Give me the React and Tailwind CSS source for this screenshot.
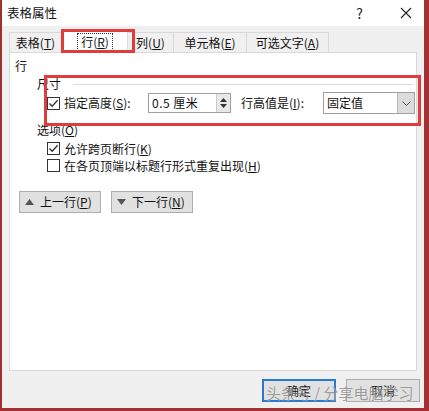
import React from "react";

const font = { fontFamily: '"Noto Sans CJK SC", "Liberation Sans", sans-serif' };

function Check({ checked }) {
  return (
    <span className="w-[13px] h-[13px] border border-[#333] bg-white flex items-center justify-center shrink-0">
      {checked && (
        <svg width="11" height="11" viewBox="0 0 11 11">
          <path d="M1.5 5.5 L4.2 8.3 L9.6 2.2" fill="none" stroke="#333" strokeWidth="1.3" />
        </svg>
      )}
    </span>
  );
}

export default function App() {
  return (
    <div className="w-[429px] h-[411px] bg-[#a23030] pl-[2px] pr-[5px] pb-[3px] text-[12px] text-[#111] leading-none relative overflow-hidden" style={font}>
      <div className="w-full h-full bg-[#f0f0f0] flex flex-col">
        {/* title bar */}
        <div className="h-[26px] bg-white flex items-center pl-[5px] pr-[12px] shrink-0">
          <span className="text-[12.5px]">表格属性</span>
          <span className="ml-auto text-[14px] mr-[37px] text-[#222]">?</span>
          <svg width="12" height="12" viewBox="0 0 12 12"><path d="M1 1 L11 11 M11 1 L1 11" stroke="#222" strokeWidth="1.1" /></svg>
        </div>
        {/* tabs */}
        <div className="h-[26px] flex items-end px-[7px] shrink-0">
          <div className="h-[20px] w-[53px] border border-b-0 border-[#d9d9d9] bg-[#f0f0f0] flex items-center justify-center">表格(<u>T</u>)</div>
          <div className="h-[23px] w-[66px] border border-b-0 border-[#d9d9d9] bg-white flex items-center justify-center relative top-[1px]">
            <span className="border border-dotted border-[#333] px-[3px] py-[2px]">行(<u>R</u>)</span>
          </div>
          <div className="h-[20px] w-[46px] border border-l-0 border-b-0 border-[#d9d9d9] flex items-center justify-center">列(<u>U</u>)</div>
          <div className="h-[20px] w-[73px] border border-l-0 border-b-0 border-[#d9d9d9] flex items-center justify-center">单元格(<u>E</u>)</div>
          <div className="h-[20px] w-[82px] border border-l-0 border-b-0 border-[#d9d9d9] flex items-center justify-center">可选文字(<u>A</u>)</div>
        </div>
        {/* panel */}
        <div className="h-[319px] mx-[7px] bg-white border border-[#d9d9d9] pl-[5px] pt-[7px] shrink-0">
          <div>行</div>
          <div className="pl-[22px] mt-[6px] flex items-center">
            <span>尺寸</span>
            <div className="flex-1 h-px bg-[#dcdcdc] ml-[12px] mr-[3px]" />
          </div>
          <div className="pl-[32px] mt-[3px] flex items-center h-[20px]">
            <Check checked />
            <span className="ml-[4px] w-[73px]">指定高度(<u>S</u>):</span>
            <div className="ml-[11px] w-[83px] h-[20px] border border-[#a0a0a0] flex items-center">
              <span className="pl-[3px] flex-1 tracking-[0.5px]">0.5 厘米</span>
              <div className="w-[14px] h-full border-l border-[#ccc] bg-[#e8e8e8] flex flex-col items-center justify-center gap-[2px]">
                <svg width="7" height="4" viewBox="0 0 7 4"><path d="M0 4 L3.5 0 L7 4Z" fill="#333" /></svg>
                <svg width="7" height="4" viewBox="0 0 7 4"><path d="M0 0 L3.5 4 L7 0Z" fill="#333" /></svg>
              </div>
            </div>
            <span className="ml-[10px] w-[72px]">行高值是(<u>I</u>):</span>
            <div className="ml-[10px] w-[92px] h-[22px] border border-[#a0a0a0] flex items-center">
              <span className="pl-[3px] flex-1">固定值</span>
              <div className="w-[17px] h-full bg-[#dcdcdc] border-l border-[#bbb] flex items-center justify-center">
                <svg width="9" height="5" viewBox="0 0 9 5"><path d="M0.5 0.5 L4.5 4.5 L8.5 0.5" fill="none" stroke="#555" /></svg>
              </div>
            </div>
          </div>
          <div className="pl-[22px] mt-[11px]">选项(<u>O</u>)</div>
          <div className="pl-[32px] mt-[6px] flex items-center">
            <Check checked />
            <span className="ml-[4px]">允许跨页断行(<u>K</u>)</span>
          </div>
          <div className="pl-[32px] mt-[4px] flex items-center">
            <Check />
            <span className="ml-[4px]">在各页顶端以标题行形式重复出现(<u>H</u>)</span>
          </div>
          <div className="mt-[19px] pl-[4px] flex gap-[10px]">
            <div className="w-[82px] h-[22px] bg-[#e1e1e1] border border-[#adadad] flex items-center pl-[5px] gap-[6px]">
              <svg width="9" height="6" viewBox="0 0 9 6"><path d="M0 6 L4.5 0 L9 6Z" fill="#555" /></svg>
              <span>上一行(<u>P</u>)</span>
            </div>
            <div className="w-[82px] h-[22px] bg-[#e1e1e1] border border-[#adadad] flex items-center pl-[5px] gap-[6px]">
              <svg width="9" height="6" viewBox="0 0 9 6"><path d="M0 0 L4.5 6 L9 0Z" fill="#555" /></svg>
              <span>下一行(<u>N</u>)</span>
            </div>
          </div>
        </div>
        {/* bottom buttons */}
        <div className="flex justify-end gap-[10px] pr-[4px] mt-[8px]">
          <div className="w-[74px] h-[23px] bg-[#e1e1e1] border-2 border-[#2a7bd0] flex items-center justify-center">确定</div>
          <div className="w-[74px] h-[23px] bg-[#e1e1e1] border border-[#adadad] flex items-center justify-center">取消</div>
        </div>
      </div>
      {/* red annotation boxes */}
      <div className="absolute left-[61px] top-[29px] w-[74px] h-[24px] border-[3px] border-[#e03c3c] pointer-events-none" />
      <div className="absolute left-[44px] top-[75px] w-[377px] h-[51px] border-[3px] border-[#e03c3c] pointer-events-none" />
      {/* watermark */}
      <div className="absolute left-[266px] top-[385px] text-[15px] text-[#888] opacity-80 whitespace-nowrap" style={{ textShadow: "0 0 1px #fff" }}>头条号 / 分享电脑学习</div>
    </div>
  );
}
